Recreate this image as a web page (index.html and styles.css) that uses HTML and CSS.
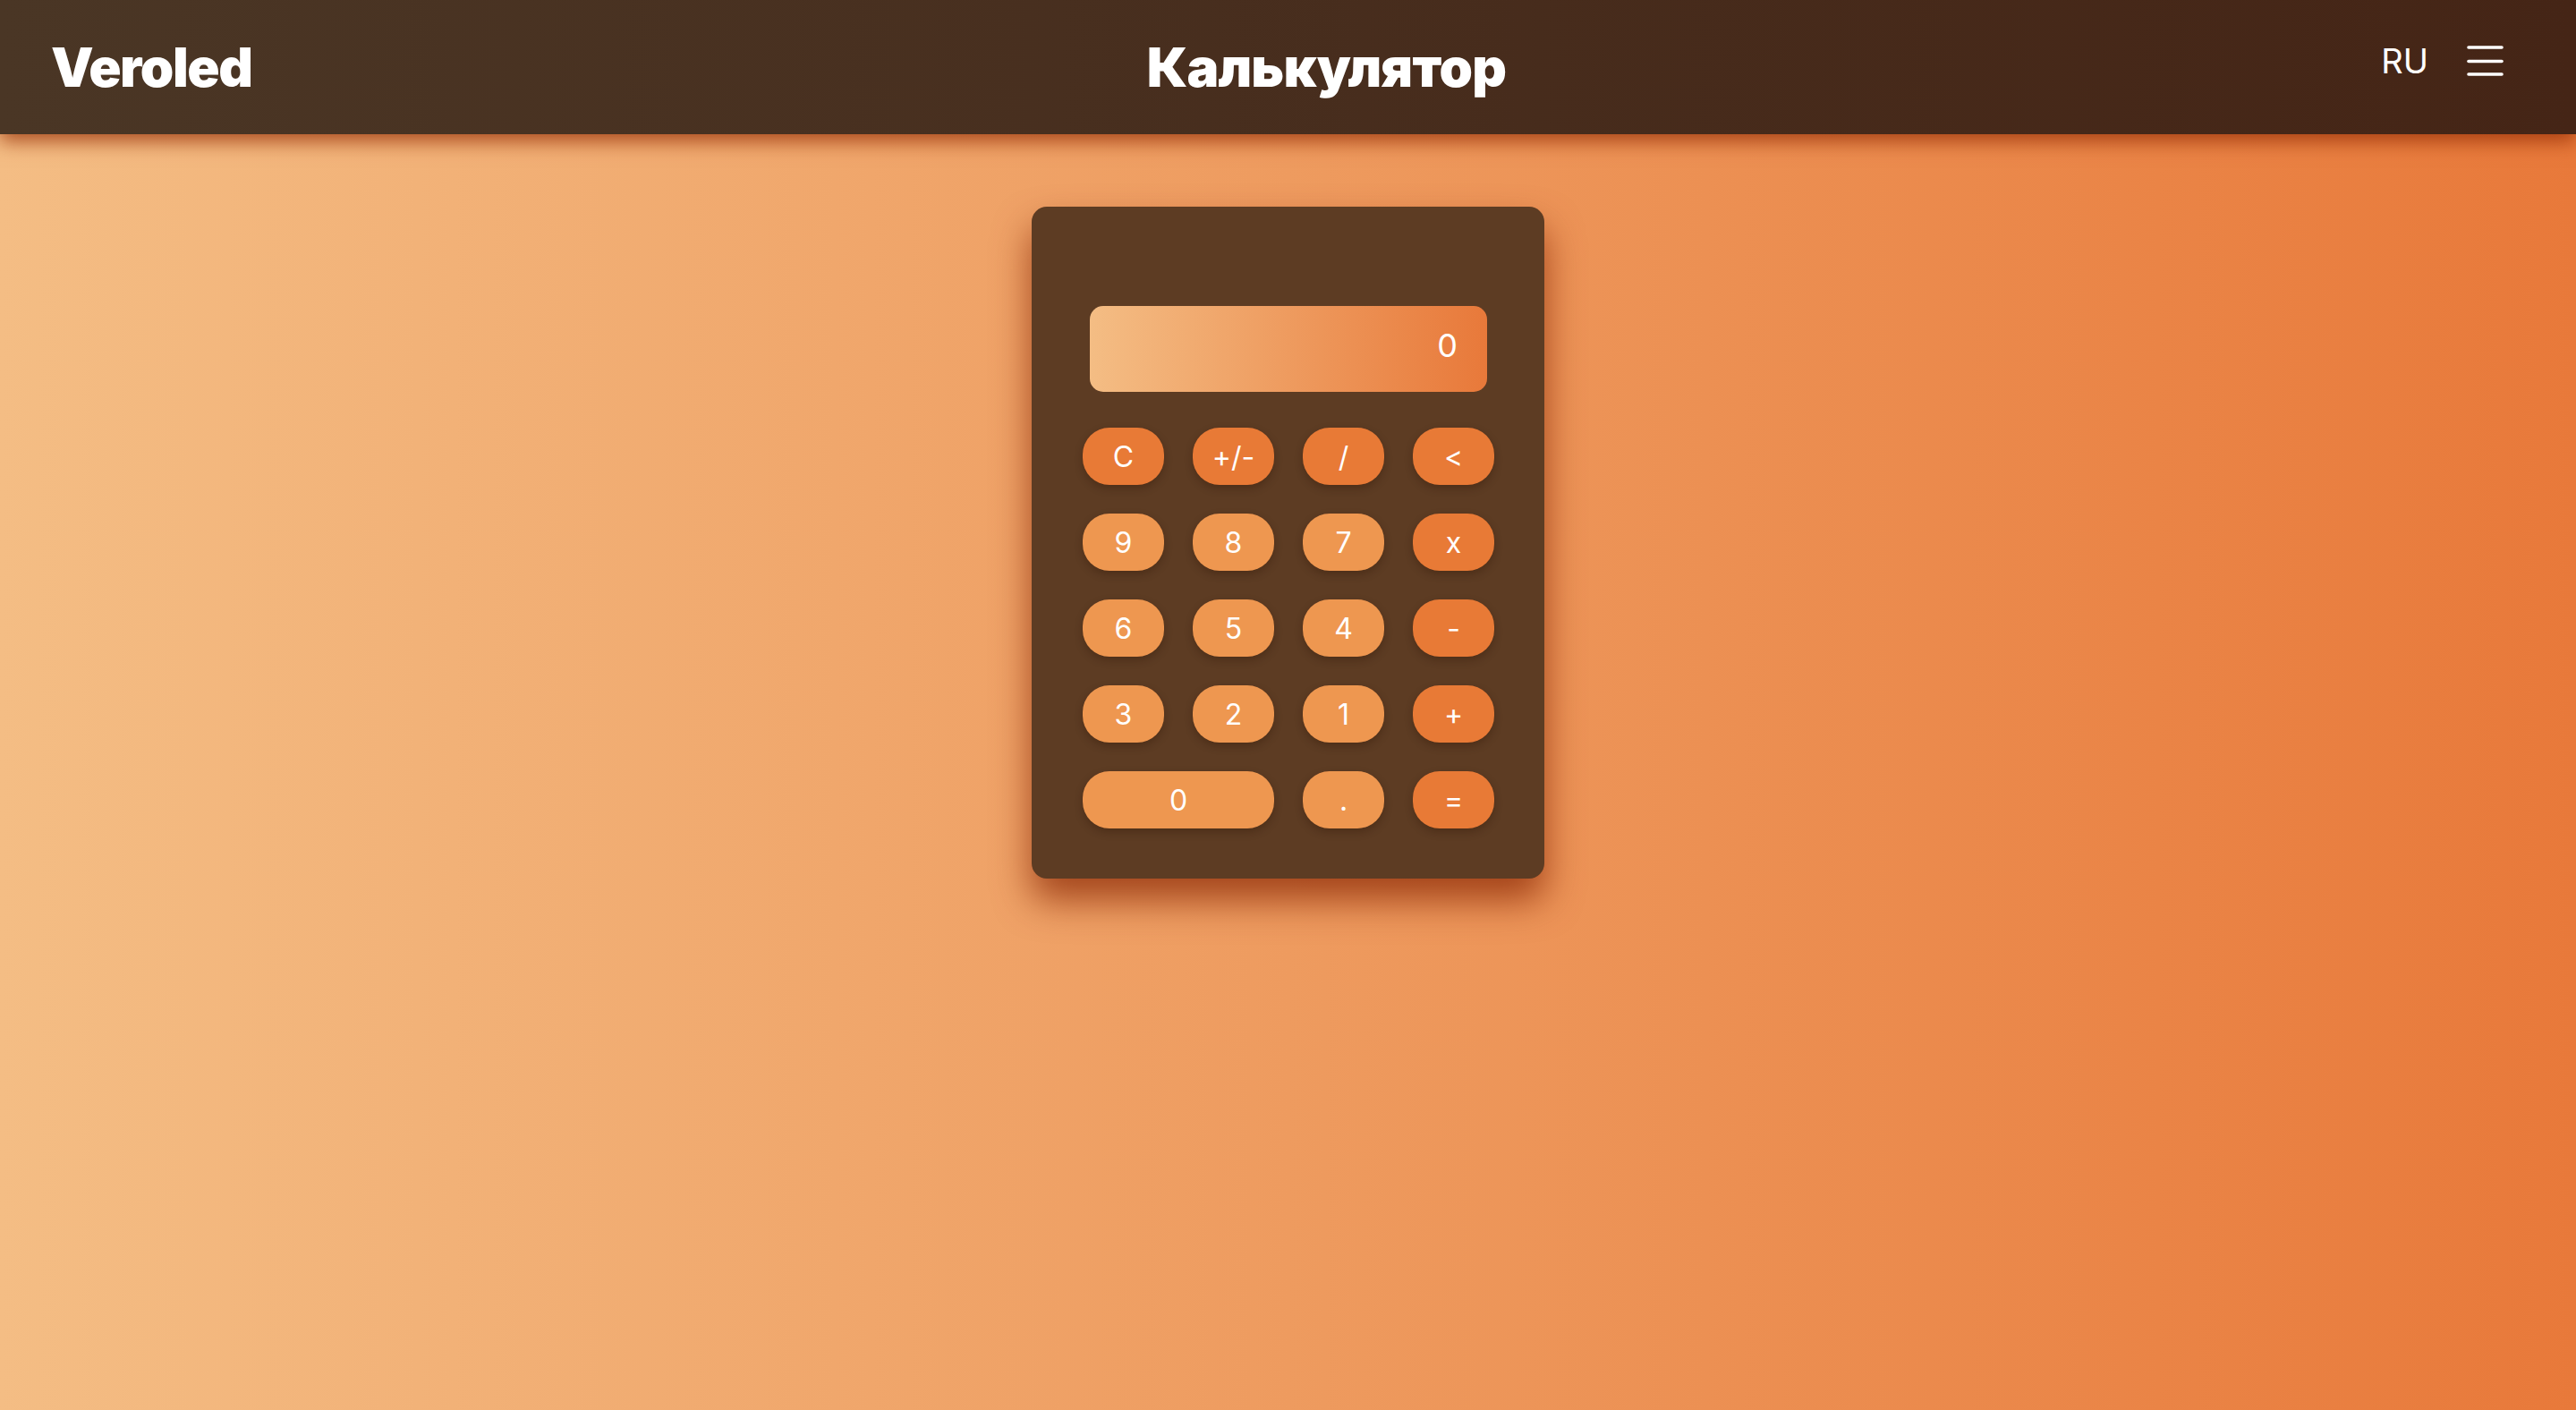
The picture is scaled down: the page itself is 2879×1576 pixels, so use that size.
FILE: index.html
```html
<!DOCTYPE html>
<html lang="ru">
<head>
<meta charset="utf-8">
<title>Калькулятор</title>
<link rel="stylesheet" href="styles.css">
</head>
<body>
<header class="topbar">
  <div class="logo">Veroled</div>
  <h1 class="title">Калькулятор</h1>
  <div class="actions">
    <span class="lang">RU</span>
    <button class="menu" aria-label="menu">
      <svg width="41" height="36" viewBox="0 0 41 36"><g stroke="#fff" stroke-width="3.6" stroke-linecap="round"><line x1="2" y1="3" x2="39" y2="3"/><line x1="2" y1="18.5" x2="39" y2="18.5"/><line x1="2" y1="33" x2="39" y2="33"/></g></svg>
    </button>
  </div>
</header>
<main class="stage">
  <div class="calc">
    <div class="screen">0</div>
    <div class="keys">
      <button class="key op">C</button>
      <button class="key op">+/-</button>
      <button class="key op">/</button>
      <button class="key op">&lt;</button>
      <button class="key">9</button>
      <button class="key">8</button>
      <button class="key">7</button>
      <button class="key op">x</button>
      <button class="key">6</button>
      <button class="key">5</button>
      <button class="key">4</button>
      <button class="key op">-</button>
      <button class="key">3</button>
      <button class="key">2</button>
      <button class="key">1</button>
      <button class="key op">+</button>
      <button class="key wide">0</button>
      <button class="key">.</button>
      <button class="key op">=</button>
    </div>
  </div>
</main>
</body>
</html>
```
FILE: styles.css
```css
* { box-sizing: border-box; }
html, body { margin: 0; padding: 0; }
body {
  min-height: 100vh;
  font-family: Inter, "Noto Sans", sans-serif;
  background: linear-gradient(to right, #f4bd84, #e8793a);
  color: #fff;
}
.topbar {
  height: 150px;
  display: flex;
  align-items: center;
  justify-content: space-between;
  padding: 0 81px 0 57px;
  background: linear-gradient(to right, #4a3625, #452516 100%);
  box-shadow: 0 8px 20px rgba(150, 45, 5, 0.75);
  position: relative;
  z-index: 2;
}
.logo {
  font-size: 60px;
  font-weight: 900;
  letter-spacing: -1.4px;
}
.title {
  margin: 0 0 0 22px;
  font-size: 60px;
  font-weight: 900;
  letter-spacing: -0.8px;
}
.actions {
  display: flex;
  align-items: center;
  gap: 43px;
  padding-bottom: 15px;
}
.lang {
  font-size: 38px;
  font-weight: 400;
}
.menu {
  background: none;
  border: 0;
  padding: 0;
  display: flex;
  cursor: pointer;
}
.stage {
  display: flex;
  justify-content: center;
  padding-top: 81px;
}
.calc {
  width: 573px;
  padding: 111px 56px 56px 57px;
  background: #5d3c23;
  border-radius: 17px;
  box-shadow: 0 24px 42px rgba(135, 35, 0, 0.72);
}
.screen {
  margin: 0 8px 40px;
  height: 96px;
  border-radius: 15px;
  background: linear-gradient(to right, #f4bd84, #e8793a);
  display: flex;
  align-items: center;
  justify-content: flex-end;
  padding: 0 33px 8px;
  font-size: 36px;
}
.keys {
  display: grid;
  grid-template-columns: repeat(4, 91px);
  grid-auto-rows: 64px;
  gap: 32px;
}
.key {
  border: 0;
  border-radius: 30px;
  background: #ee9750;
  color: #fff;
  font-family: Inter, "Noto Sans", sans-serif;
  font-size: 32px;
  font-weight: 400;
  box-shadow: 0 4px 10px rgba(40, 15, 0, 0.3);
  padding: 0;
}
.key.op { background: #e87a36; }
.key.wide { grid-column: span 2; }
```
